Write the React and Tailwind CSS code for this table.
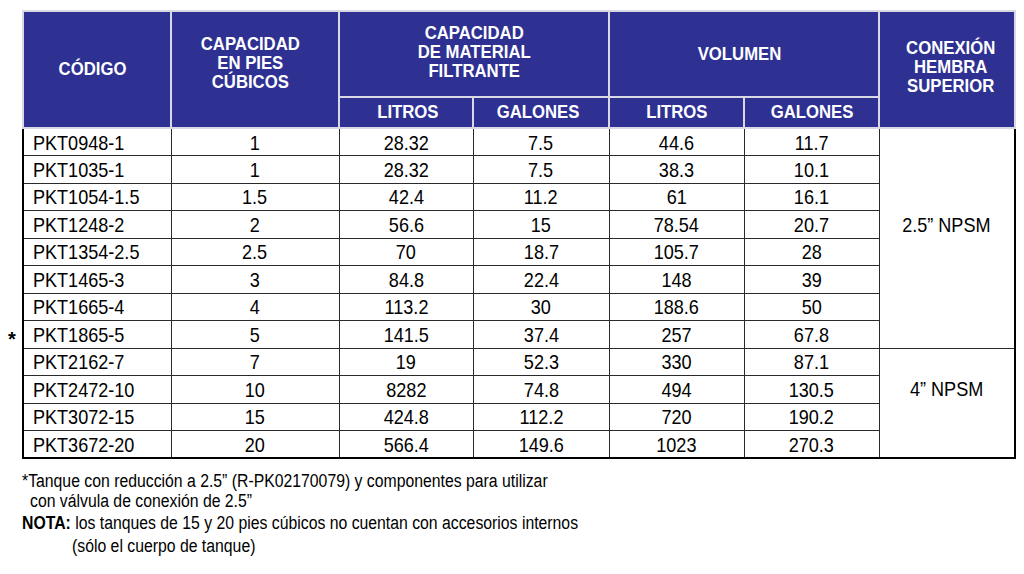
import React from "react";

const rows = [
  ["PKT0948-1", "1", "28.32", "7.5", "44.6", "11.7"],
  ["PKT1035-1", "1", "28.32", "7.5", "38.3", "10.1"],
  ["PKT1054-1.5", "1.5", "42.4", "11.2", "61", "16.1"],
  ["PKT1248-2", "2", "56.6", "15", "78.54", "20.7"],
  ["PKT1354-2.5", "2.5", "70", "18.7", "105.7", "28"],
  ["PKT1465-3", "3", "84.8", "22.4", "148", "39"],
  ["PKT1665-4", "4", "113.2", "30", "188.6", "50"],
  ["PKT1865-5", "5", "141.5", "37.4", "257", "67.8"],
  ["PKT2162-7", "7", "19", "52.3", "330", "87.1"],
  ["PKT2472-10", "10", "8282", "74.8", "494", "130.5"],
  ["PKT3072-15", "15", "424.8", "112.2", "720", "190.2"],
  ["PKT3672-20", "20", "566.4", "149.6", "1023", "270.3"],
];

function H({ children }) {
  return (
    <span className="inline-block scale-x-[0.88] leading-[19px]">{children}</span>
  );
}

function B({ children, left }) {
  return (
    <span
      className={
        left
          ? "inline-block scale-x-[0.86] origin-left"
          : "inline-block scale-x-[0.86]"
      }
    >
      {children}
    </span>
  );
}

const th =
  "border-2 border-[#d9d9e6] bg-[#2e3192] text-white font-bold text-[19px] text-center align-middle p-0";
const td =
  "border border-[#2a2a2a] text-[21px] text-black text-center align-middle p-0 leading-none";

export default function App() {
  return (
    <div className="w-[1024px] h-[574px] bg-white font-['Liberation_Sans',Arial,sans-serif] overflow-hidden">
      <div className="pt-[10px] pl-[22px]">
        <table className="border-collapse table-fixed w-[992px] border-2 border-black">
          <colgroup>
            <col className="w-[148px]" />
            <col className="w-[168px]" />
            <col className="w-[134px]" />
            <col className="w-[136px]" />
            <col className="w-[135px]" />
            <col className="w-[135px]" />
            <col className="w-[136px]" />
          </colgroup>
          <thead>
            <tr className="h-[86px]">
              <th rowSpan={2} className={th + " pr-[8px]"}>
                <H>CÓDIGO</H>
              </th>
              <th rowSpan={2} className={th + " pb-2 pr-[10px]"}>
                <H>
                  CAPACIDAD
                  <br />
                  EN PIES
                  <br />
                  CÚBICOS
                </H>
              </th>
              <th colSpan={2} className={th}>
                <H>
                  CAPACIDAD
                  <br />
                  DE MATERIAL
                  <br />
                  FILTRANTE
                </H>
              </th>
              <th colSpan={2} className={th + " pr-[10px]"}>
                <H>VOLUMEN</H>
              </th>
              <th rowSpan={2} className={th + " pl-[8px]"}>
                <H>
                  CONEXIÓN
                  <br />
                  HEMBRA
                  <br />
                  SUPERIOR
                </H>
              </th>
            </tr>
            <tr className="h-[31px]">
              <th className={th + " pl-[4px]"}>
                <H>LITROS</H>
              </th>
              <th className={th + " pr-[6px]"}>
                <H>GALONES</H>
              </th>
              <th className={th}>
                <H>LITROS</H>
              </th>
              <th className={th}>
                <H>GALONES</H>
              </th>
            </tr>
          </thead>
          <tbody>
            {rows.map((r, i) => (
              <tr key={r[0]} className="h-[27.5px]">
                <td className={td + " text-left pl-[9px] relative"}>
                  {i === 7 && (
                    <span className="absolute left-[-16px] top-[8px] text-[20px] font-bold">
                      *
                    </span>
                  )}
                  <B left>{r[0]}</B>
                </td>
                {r.slice(1).map((c, j) => (
                  <td key={j} className={td}>
                    <B>{c}</B>
                  </td>
                ))}
                {i === 0 && (
                  <td rowSpan={8} className={td + " pb-7"}>
                    <B>2.5” NPSM</B>
                  </td>
                )}
                {i === 8 && (
                  <td rowSpan={4} className={td + " pb-7"}>
                    <B>4” NPSM</B>
                  </td>
                )}
              </tr>
            ))}
          </tbody>
        </table>
      </div>
      <div className="pl-[22px] pt-[12px] text-[18px] text-black">
        <div className="leading-[20px]">
          <span className="inline-block scale-x-[0.877] origin-left whitespace-nowrap">
            *Tanque con reducción a 2.5” (R-PK02170079) y componentes para utilizar
          </span>
        </div>
        <div className="leading-[20px] pl-[8px]">
          <span className="inline-block scale-x-[0.877] origin-left whitespace-nowrap">
            con válvula de conexión de 2.5”
          </span>
        </div>
        <div className="leading-[23px] mt-[1px]">
          <span className="inline-block scale-x-[0.877] origin-left whitespace-nowrap">
            <span className="font-bold">NOTA:</span> los tanques de 15 y 20 pies
            cúbicos no cuentan con accesorios internos
          </span>
        </div>
        <div className="leading-[23px] pl-[50px]">
          <span className="inline-block scale-x-[0.877] origin-left whitespace-nowrap">
            (sólo el cuerpo de tanque)
          </span>
        </div>
      </div>
    </div>
  );
}
